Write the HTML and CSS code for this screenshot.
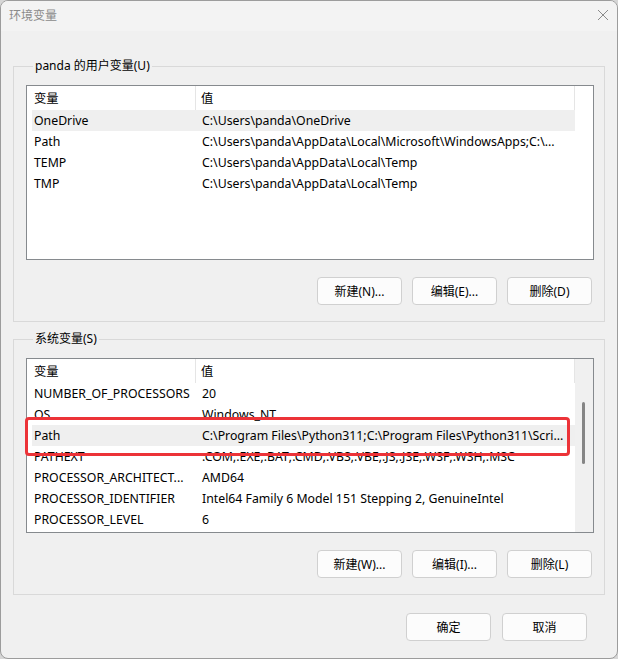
FILE: index.html
```html
<!DOCTYPE html>
<html lang="zh-CN">
<head>
  <meta charset="UTF-8">
  <title>环境变量</title>
  <link rel="stylesheet" href="styles.css">
</head>
<body>
  <div class="ventana">
    <div class="titulo">
      <span>环境变量</span>
      <svg class="cerrar" width="12" height="12" viewBox="0 0 12 12">
        <path d="M1 1 L11 11 M11 1 L1 11" stroke="#8a8a8a" stroke-width="1" fill="none"/>
      </svg>
    </div>

    <div class="contenido">
      <fieldset class="grupo">
        <legend>panda 的用户变量(U)</legend>
        <div class="lista">
          <div class="cuerpo">
            <div class="cabecera"><div>变量</div><div>值</div></div>
            <div class="fila activa"><div>OneDrive</div><div>C:\Users\panda\OneDrive</div></div>
            <div class="fila"><div>Path</div><div>C:\Users\panda\AppData\Local\Microsoft\WindowsApps;C:\...</div></div>
            <div class="fila"><div>TEMP</div><div>C:\Users\panda\AppData\Local\Temp</div></div>
            <div class="fila"><div>TMP</div><div>C:\Users\panda\AppData\Local\Temp</div></div>
          </div>
          <div class="barra vacia"></div>
        </div>
        <div class="botones">
          <button>新建(N)...</button>
          <button>编辑(E)...</button>
          <button>删除(D)</button>
        </div>
      </fieldset>

      <fieldset class="grupo">
        <legend>系统变量(S)</legend>
        <div class="lista">
          <div class="cuerpo">
            <div class="cabecera"><div>变量</div><div>值</div></div>
            <div class="fila"><div>NUMBER_OF_PROCESSORS</div><div>20</div></div>
            <div class="fila"><div>OS</div><div>Windows_NT</div></div>
            <div class="fila activa"><div>Path</div><div>C:\Program Files\Python311;C:\Program Files\Python311\Scri...</div></div>
            <div class="fila"><div>PATHEXT</div><div>.COM;.EXE;.BAT;.CMD;.VBS;.VBE;.JS;.JSE;.WSF;.WSH;.MSC</div></div>
            <div class="fila"><div>PROCESSOR_ARCHITECT...</div><div>AMD64</div></div>
            <div class="fila"><div>PROCESSOR_IDENTIFIER</div><div>Intel64 Family 6 Model 151 Stepping 2, GenuineIntel</div></div>
            <div class="fila"><div>PROCESSOR_LEVEL</div><div>6</div></div>
          </div>
          <div class="barra"><div class="pulgar"></div></div>
          <div class="marca"></div>
        </div>
        <div class="botones">
          <button>新建(W)...</button>
          <button>编辑(I)...</button>
          <button>删除(L)</button>
        </div>
      </fieldset>

      <div class="pie">
        <button>确定</button>
        <button>取消</button>
      </div>
    </div>
  </div>
</body>
</html>
```

FILE: styles.css
```css
body {
  margin: 0;
  background: #d6d6d6;
  font-family: "Noto Sans", "Noto Sans CJK SC", sans-serif;
  font-size: 12px;
  color: #000;
}
.ventana {
  box-sizing: border-box;
  width: 618px;
  height: 659px;
  border: 1px solid #9c9c9c;
  border-radius: 8px;
  background: #f0f0f0;
  overflow: hidden;
}
.titulo {
  height: 30px;
  background: #f3f3f3;
  display: flex;
  align-items: center;
  justify-content: space-between;
  padding: 0 8px 0 8px;
  color: #8a8a8a;
}
.titulo span {
  margin-top: -2px;
}
.cerrar {
  margin-top: -2px;
  margin-right: 0;
}
.contenido {
  padding: 27px 12px 0 12px;
}
.grupo {
  margin: 0 0 9px 0;
  padding: 11px 10px 16px 12px;
  border: 1px solid #d9d9d9;
  min-width: 0;
}
.grupo legend {
  padding: 0 2px;
  margin-left: 7px;
  line-height: 16px;
}
.lista {
  position: relative;
  box-sizing: border-box;
  height: 175px;
  border: 1px solid #868a8e;
  background: #fff;
  display: flex;
  font-size: 12.3px;
}
.cuerpo {
  flex: 1;
  padding-left: 5px;
  overflow: hidden;
}
.cabecera, .fila {
  display: grid;
  grid-template-columns: 164px 1fr;
  white-space: nowrap;
}
.cabecera {
  height: 24px;
  align-items: center;
}
.cabecera div {
  height: 100%;
  display: flex;
  align-items: center;
  border-right: 1px solid #e5e5e5;
}
.cabecera div:first-child {
  padding-left: 2px;
}
.cabecera div:last-child {
  padding-left: 5px;
}
.fila {
  height: 21px;
  align-items: center;
}
.fila div {
  overflow: hidden;
}
.fila div:first-child {
  padding-left: 2px;
}
.fila div:last-child {
  padding-left: 6px;
}
.activa {
  background: #efefef;
}
.barra {
  width: 18px;
  background: #f0f0f0;
  position: relative;
}
.barra.vacia {
  background: #fff;
}
.pulgar {
  position: absolute;
  left: 7px;
  top: 43px;
  width: 3px;
  height: 62px;
  border-radius: 2px;
  background: #858585;
}
.marca {
  position: absolute;
  left: -2px;
  top: 58px;
  width: 545px;
  height: 39px;
  box-sizing: border-box;
  border: 3px solid #ec3338;
  border-radius: 4px;
}
.botones {
  display: flex;
  justify-content: flex-end;
  gap: 10px;
  margin-top: 17px;
  padding-right: 2px;
}
button {
  width: 85px;
  height: 28px;
  border: 1px solid #d0d0d0;
  border-radius: 4px;
  background: #fcfcfc;
  font-family: "Noto Sans", "Noto Sans CJK SC", sans-serif;
  font-size: 12px;
  color: #000;
  padding: 0;
}
.pie {
  display: flex;
  justify-content: flex-end;
  gap: 11px;
  margin-top: 18px;
  padding-right: 18px;
}
```
